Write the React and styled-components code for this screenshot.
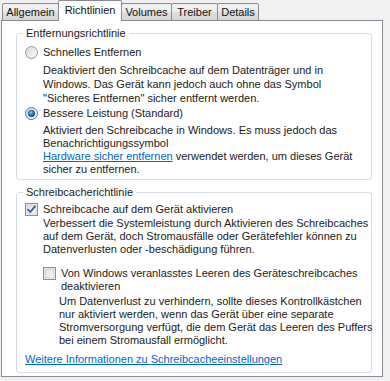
import React from 'react'
import styled, { createGlobalStyle } from 'styled-components'

const GlobalStyle = createGlobalStyle`
  html, body {
    margin: 0;
    padding: 0;
    background: #f0f0f0;
  }
  body {
    font-family: "Liberation Sans", Arial, sans-serif;
    font-size: 11px;
    color: #1a1a1a;
  }
`

const Window = styled.div`
  width: 390px;
  height: 381px;
  background: #f0f0f0;
  padding-left: 1px;
  box-sizing: border-box;
  overflow: hidden;
`

const TabStrip = styled.div`
  display: flex;
  align-items: flex-end;
  height: 21px;
  padding-left: 1px;
  position: relative;
  z-index: 1;
`

const Tab = styled.div`
  box-sizing: border-box;
  height: ${(p) => (p.$active ? '21px' : '18px')};
  width: ${(p) => p.$w}px;
  margin-left: -1px;
  border: 1px solid #898c95;
  border-bottom: ${(p) => (p.$active ? 'none' : '1px solid #898c95')};
  border-radius: 2px 2px 0 0;
  background: ${(p) =>
    p.$active
      ? '#ffffff'
      : 'linear-gradient(to bottom, #f3f3f3 0%, #ebebeb 45%, #dedede 55%, #d6d6d6 100%)'};
  display: flex;
  align-items: center;
  justify-content: center;
  padding-bottom: ${(p) => (p.$active ? '3px' : '0')};
  color: #111;
  white-space: nowrap;
  &:first-child {
    margin-left: 0;
  }
`

const Panel = styled.div`
  box-sizing: border-box;
  width: 382px;
  height: 357px;
  margin-top: -1px;
  background: #ffffff;
  border: 1px solid #898c95;
  padding: 6px 10px 0 14px;
`

const Group = styled.fieldset`
  margin: ${(p) => (p.$first ? '0' : '6px 0 0 0')};
  padding: 0 0 ${(p) => p.$pb}px 0;
  border: 1px solid #d5dfe5;
  border-radius: 3px;
  min-width: 0;
`

const Legend = styled.legend`
  margin-left: 6px;
  padding: 0 3px;
  line-height: 13px;
  color: #1a1a1a;
`

const OptionRow = styled.label`
  display: flex;
  align-items: flex-start;
  gap: 5px;
  margin: ${(p) => p.$mt}px 0 0 ${(p) => p.$indent}px;
  line-height: 13px;
`

const Glyph = styled.span`
  flex: none;
  width: 13px;
  height: 13px;
  display: block;
`

const Desc = styled.p`
  margin: ${(p) => p.$mt}px 0 0 ${(p) => p.$indent}px;
  line-height: ${(p) => p.$lh || 13}px;
  white-space: nowrap;
`

const Link = styled.a`
  color: #0066cc;
  text-decoration: underline;
  cursor: pointer;
`

const FootLink = styled(Link)`
  display: block;
  margin: ${(p) => p.$mt}px 0 0 8px;
  line-height: 13px;
`

function Radio({ checked }) {
  return (
    <Glyph>
      <svg width="13" height="13" viewBox="0 0 13 13">
        <defs>
          <linearGradient id={checked ? 'rOn' : 'rOff'} x1="0" y1="0" x2="1" y2="1">
            <stop offset="0" stopColor="#d7d7d7" />
            <stop offset="1" stopColor="#fbfbfb" />
          </linearGradient>
          <radialGradient id="rDot" cx="0.4" cy="0.35" r="0.7">
            <stop offset="0" stopColor="#8fd2ff" />
            <stop offset="0.5" stopColor="#1f7fc4" />
            <stop offset="1" stopColor="#0d3f6b" />
          </radialGradient>
        </defs>
        <circle
          cx="6.5"
          cy="6.5"
          r="6"
          fill={`url(#${checked ? 'rOn' : 'rOff'})`}
          stroke={checked ? '#5d7794' : '#969696'}
          strokeWidth="1"
        />
        {checked && <circle cx="6.5" cy="6.5" r="3.3" fill="url(#rDot)" stroke="#1c4a73" strokeWidth="0.6" />}
      </svg>
    </Glyph>
  )
}

function Check({ checked }) {
  return (
    <Glyph>
      <svg width="13" height="13" viewBox="0 0 13 13">
        <defs>
          <linearGradient id="cBg" x1="0" y1="0" x2="1" y2="1">
            <stop offset="0" stopColor="#dcdcdc" />
            <stop offset="1" stopColor="#fafafa" />
          </linearGradient>
        </defs>
        <rect x="0.5" y="0.5" width="12" height="12" fill="#fff" stroke="#8e8f8f" />
        <rect x="2" y="2" width="9" height="9" fill="url(#cBg)" stroke="#c3c3c3" strokeWidth="0.8" />
        {checked && (
          <path
            d="M3 6.6 L5.3 9 L10 3.4"
            fill="none"
            stroke="#3a5a9a"
            strokeWidth="1.8"
            strokeLinecap="round"
            strokeLinejoin="round"
          />
        )}
      </svg>
    </Glyph>
  )
}

export default function App() {
  return (
    <>
      <GlobalStyle />
      <Window>
        <TabStrip>
          <Tab $w={57}>Allgemein</Tab>
          <Tab $w={64} $active>
            Richtlinien
          </Tab>
          <Tab $w={51}>Volumes</Tab>
          <Tab $w={47}>Treiber</Tab>
          <Tab $w={42}>Details</Tab>
        </TabStrip>
        <Panel>
          <Group $first $pb={3}>
            <Legend>Entfernungsrichtlinie</Legend>
            <OptionRow $mt={6} $indent={8}>
              <Radio />
              Schnelles Entfernen
            </OptionRow>
            <Desc $mt={4} $indent={26} $lh={14}>
              Deaktiviert den Schreibcache auf dem Datenträger und in
              <br />
              Windows. Das Gerät kann jedoch auch ohne das Symbol
              <br />
              "Sicheres Entfernen" sicher entfernt werden.
            </Desc>
            <OptionRow $mt={2} $indent={8}>
              <Radio checked />
              Bessere Leistung (Standard)
            </OptionRow>
            <Desc $mt={4} $indent={26}>
              Aktiviert den Schreibcache in Windows. Es muss jedoch das
              <br />
              Benachrichtigungssymbol
              <br />
              <Link>Hardware sicher entfernen</Link> verwendet werden, um dieses Gerät
              <br />
              sicher zu entfernen.
            </Desc>
          </Group>
          <Group $pb={6}>
            <Legend>Schreibcacherichtlinie</Legend>
            <OptionRow $mt={4} $indent={8}>
              <Check checked />
              Schreibcache auf dem Gerät aktivieren
            </OptionRow>
            <Desc $mt={1} $indent={26}>
              Verbessert die Systemleistung durch Aktivieren des Schreibcaches
              <br />
              auf dem Gerät, doch Stromausfälle oder Gerätefehler können zu
              <br />
              Datenverlusten oder -beschädigung führen.
            </Desc>
            <OptionRow $mt={11} $indent={26}>
              <Check />
              <span>
                Von Windows veranlasstes Leeren des Geräteschreibcaches
                <br />
                deaktivieren
              </span>
            </OptionRow>
            <Desc $mt={2} $indent={42}>
              Um Datenverlust zu verhindern, sollte dieses Kontrollkästchen
              <br />
              nur aktiviert werden, wenn das Gerät über eine separate
              <br />
              Stromversorgung verfügt, die dem Gerät das Leeren des Puffers
              <br />
              bei einem Stromausfall ermöglicht.
            </Desc>
            <FootLink $mt={6}>Weitere Informationen zu Schreibcacheeinstellungen</FootLink>
          </Group>
        </Panel>
      </Window>
    </>
  )
}
